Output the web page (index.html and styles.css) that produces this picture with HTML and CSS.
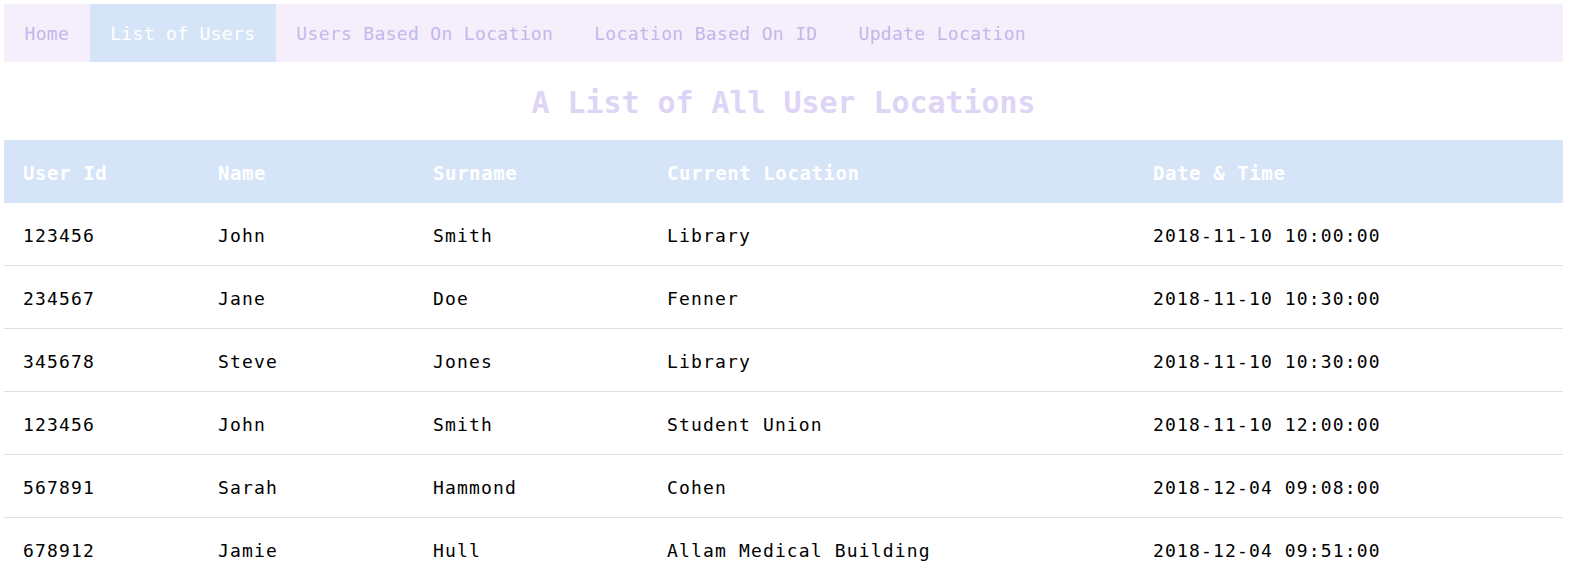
FILE: index.html
```html
<!DOCTYPE html>
<html lang="en">
<head>
<meta charset="utf-8">
<title>User Locations</title>
<link rel="stylesheet" href="styles.css">
</head>
<body>
<div class="page">
  <nav class="topnav">
    <a class="nav-link" href="#">Home</a>
    <a class="nav-link active" href="#">List of Users</a>
    <a class="nav-link" href="#">Users Based On Location</a>
    <a class="nav-link" href="#">Location Based On ID</a>
    <a class="nav-link" href="#">Update Location</a>
  </nav>
  <h1 class="title">A List of All User Locations</h1>
  <table class="users">
    <colgroup>
      <col class="c-id"><col class="c-name"><col class="c-surname"><col class="c-loc"><col class="c-date">
    </colgroup>
    <thead>
      <tr><th>User Id</th><th>Name</th><th>Surname</th><th>Current Location</th><th>Date &amp; Time</th></tr>
    </thead>
    <tbody>
      <tr><td>123456</td><td>John</td><td>Smith</td><td>Library</td><td>2018-11-10 10:00:00</td></tr>
      <tr><td>234567</td><td>Jane</td><td>Doe</td><td>Fenner</td><td>2018-11-10 10:30:00</td></tr>
      <tr><td>345678</td><td>Steve</td><td>Jones</td><td>Library</td><td>2018-11-10 10:30:00</td></tr>
      <tr><td>123456</td><td>John</td><td>Smith</td><td>Student Union</td><td>2018-11-10 12:00:00</td></tr>
      <tr><td>567891</td><td>Sarah</td><td>Hammond</td><td>Cohen</td><td>2018-12-04 09:08:00</td></tr>
      <tr><td>678912</td><td>Jamie</td><td>Hull</td><td>Allam Medical Building</td><td>2018-12-04 09:51:00</td></tr>
    </tbody>
  </table>
</div>
</body>
</html>
```
FILE: styles.css
```css
html, body {
  margin: 0;
  padding: 0;
  background: #ffffff;
}

body {
  font-family: "DejaVu Sans Mono", "Liberation Mono", monospace;
  color: #000000;
}

.page {
  padding: 4px 7px 0 4px;
}

.topnav {
  display: flex;
  background: #f5effb;
  height: 58px;
}

.nav-link {
  display: block;
  padding: 19px 20.5px 17px;
  line-height: 22px;
  font-size: 18px;
  letter-spacing: 0.33px;
  color: #c6b6ec;
  text-decoration: none;
}

.nav-link.active {
  background: #d6e4f8;
  color: #ffffff;
}

.title {
  margin: 24px 0 20px;
  font-size: 29.9px;
  line-height: 34px;
  font-weight: bold;
  text-align: center;
  color: #ddd4f6;
}

.users {
  width: 100%;
  table-layout: fixed;
  border-collapse: separate;
  border-spacing: 0;
  font-size: 18px;
  letter-spacing: 1.15px;
}

.c-id { width: 195px; }
.c-name { width: 215px; }
.c-surname { width: 234px; }
.c-loc { width: 486px; }
.c-date { width: 429px; }

.users th,
.users td {
  text-align: left;
  line-height: 22px;
  padding: 22px 18px 18px 19px;
  white-space: nowrap;
}

.users th {
  background: #d6e4f8;
  color: #ffffff;
  font-weight: bold;
  font-size: 19px;
  letter-spacing: 0.6px;
  padding-bottom: 19px;
}

.users td {
  border-bottom: 1px solid #e0e0e0;
}
```
